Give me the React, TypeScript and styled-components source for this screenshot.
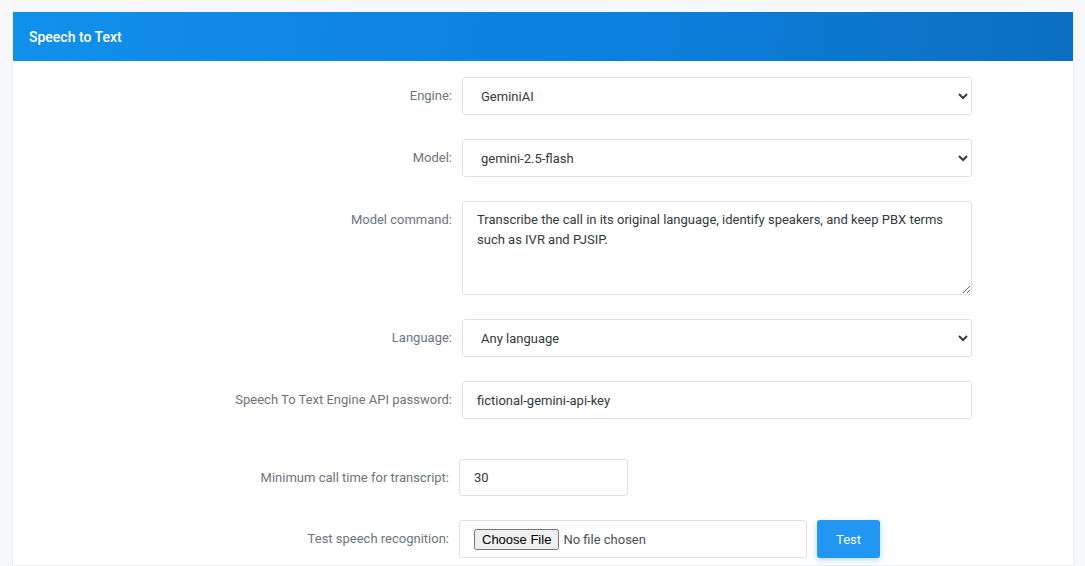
import React from "react";
import styled, { createGlobalStyle } from "styled-components";

const Global = createGlobalStyle`
  html, body { margin: 0; padding: 0; background: #f7f8fa; font-family: Roboto, "Liberation Sans", sans-serif; }
`;

const Page = styled.div`
  padding: 12px 11px 0 12px;
`;

const Card = styled.div`
  background: #fff;
  border: 1px solid #eceef1;
  border-top: none;
  height: 554px;
  box-sizing: border-box;
`;

const Header = styled.div`
  height: 49px;
  background: linear-gradient(100deg, #1190ea 0%, #0c7fdc 60%, #0b6fc0 100%);
  color: #fff;
  font-size: 14px;
  font-weight: 500;
  display: flex;
  align-items: center;
  padding-left: 16px;
`;

const Body = styled.div`
  padding-top: 16px;
  display: flex;
  flex-direction: column;
`;

const Row = styled.div<{ $mb: number; $lw: number }>`
  display: grid;
  grid-template-columns: ${(p) => p.$lw}px auto auto;
  column-gap: 10px;
  justify-content: start;
  margin-bottom: ${(p) => p.$mb}px;
`;

const Label = styled.label`
  text-align: right;
  font-size: 13px;
  color: #6c757d;
  padding-top: 11px;
`;

const fieldBase = `
  box-sizing: border-box;
  border: 1px solid #dee2e6;
  border-radius: 3px;
  background: #fff;
  font-family: Roboto, "Liberation Sans", sans-serif;
  font-size: 13px;
  color: #343a40;
`;

const Select = styled.select`
  ${fieldBase}
  width: 510px;
  height: 38px;
  padding: 0 14px;
`;

const Input = styled.input<{ $w: number }>`
  ${fieldBase}
  width: ${(p) => p.$w}px;
  height: ${(p) => (p.$w === 169 ? 37 : 38)}px;
  padding: 0 ${(p) => (p.$w === 169 ? 14 : 14)}px;
  outline: none;
`;

const TextArea = styled.textarea`
  ${fieldBase}
  width: 510px;
  height: 94px;
  padding: 8px 14px;
  line-height: 20px;
  resize: vertical;
`;

const FileBox = styled.div`
  ${fieldBase}
  width: 348px;
  height: 38px;
  display: flex;
  align-items: center;
  padding-left: 14px;
  input { font-family: Roboto, "Liberation Sans", sans-serif; font-size: 13px; color: #495057; }
`;

const TestButton = styled.button`
  width: 63px;
  height: 38px;
  border: none;
  border-radius: 3px;
  background: #2196f3;
  color: #fff;
  font-family: Roboto, "Liberation Sans", sans-serif;
  font-size: 13px;
  box-shadow: 0 2px 6px rgba(33, 150, 243, 0.35);
`;

export default function App() {
  return (
    <>
      <Global />
      <Page>
        <Card>
          <Header>Speech to Text</Header>
          <Body>
            <Row $lw={439} $mb={24}>
              <Label>Engine:</Label>
              <Select defaultValue="GeminiAI"><option>GeminiAI</option></Select>
            </Row>
            <Row $lw={439} $mb={24}>
              <Label>Model:</Label>
              <Select defaultValue="gemini-2.5-flash"><option>gemini-2.5-flash</option></Select>
            </Row>
            <Row $lw={439} $mb={24}>
              <Label>Model command:</Label>
              <TextArea defaultValue="Transcribe the call in its original language, identify speakers, and keep PBX terms such as IVR and PJSIP." />
            </Row>
            <Row $lw={439} $mb={24}>
              <Label>Language:</Label>
              <Select defaultValue="Any language"><option>Any language</option></Select>
            </Row>
            <Row $lw={439} $mb={40}>
              <Label>Speech To Text Engine API password:</Label>
              <Input $w={510} defaultValue="fictional-gemini-api-key" />
            </Row>
            <Row $lw={436} $mb={24}>
              <Label>Minimum call time for transcript:</Label>
              <Input $w={169} defaultValue="30" />
            </Row>
            <Row $lw={436} $mb={0}>
              <Label>Test speech recognition:</Label>
              <FileBox><input type="file" /></FileBox>
              <TestButton>Test</TestButton>
            </Row>
          </Body>
        </Card>
      </Page>
    </>
  );
}
